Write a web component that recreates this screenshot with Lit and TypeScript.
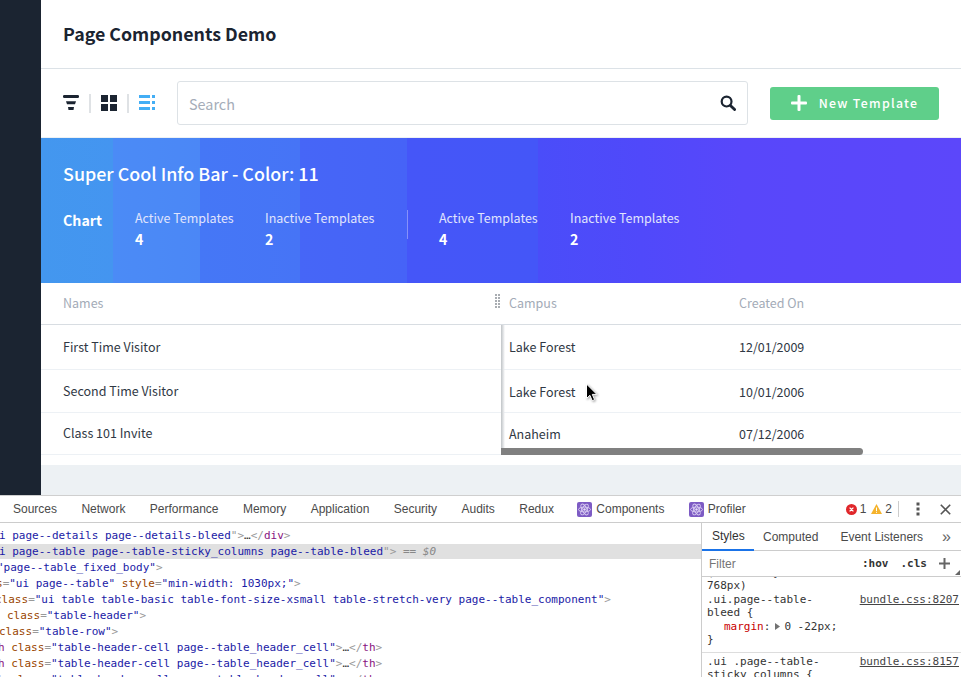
import { LitElement, html, css, svg } from "lit";
import { customElement } from "lit/decorators.js";

type Seg = [string, string];
const N = "n", V = "v", P = "p", T = "t", D = "d", C = "c";

// x offset of each line, the panel is scrolled sideways in the reference
const codeLines: { x: number; sel?: boolean; segs: Seg[] }[] = [
  { x: -1, segs: [[V, "i page--details page--details-bleed"], [P, '">'], [D, "…"], [P, "</"], [T, "div"], [P, ">"]] },
  { x: -1, sel: true, segs: [[V, "i page--table page--table-sticky_columns page--table-bleed"], [P, '">'], [C, " == $0"]] },
  { x: -3, segs: [[V, '"page--table_fixed_body"'], [P, ">"]] },
  { x: -4, segs: [[N, "s"], [P, "="], [V, '"ui page--table"'], [N, " style"], [P, "="], [V, '"min-width: 1030px;"'], [P, ">"]] },
  { x: -5, segs: [[N, "class"], [P, "="], [V, '"ui table table-basic table-font-size-xsmall table-stretch-very page--table_component"'], [P, ">"]] },
  { x: 7, segs: [[N, "class"], [P, "="], [V, '"table-header"'], [P, ">"]] },
  { x: -1, segs: [[N, "class"], [P, "="], [V, '"table-row"'], [P, ">"]] },
  { x: -2, segs: [[T, "h"], [N, " class"], [P, "="], [V, '"table-header-cell page--table_header_cell"'], [P, ">"], [D, "…"], [P, "</"], [T, "th"], [P, ">"]] },
  { x: -2, segs: [[T, "h"], [N, " class"], [P, "="], [V, '"table-header-cell page--table_header_cell"'], [P, ">"], [D, "…"], [P, "</"], [T, "th"], [P, ">"]] },
  { x: -2, segs: [[T, "h"], [N, " class"], [P, "="], [V, '"table-header-cell page--table_header_cell"'], [P, ">"], [D, "…"], [P, "</"], [T, "th"], [P, ">"]] },
];

const names = ["First Time Visitor", "Second Time Visitor", "Class 101 Invite"];
const campus = [
  ["Lake Forest", "12/01/2009"],
  ["Lake Forest", "10/01/2006"],
  ["Anaheim", "07/12/2006"],
];

const reactIcon = svg`<svg class="react" width="15" height="15" viewBox="0 0 15 15">
  <rect width="15" height="15" rx="2" fill="#7d5bc4"/>
  <g fill="none" stroke="#d9cdf2" stroke-width=".9">
    <ellipse cx="7.5" cy="7.5" rx="6" ry="2.4"/>
    <ellipse cx="7.5" cy="7.5" rx="6" ry="2.4" transform="rotate(60 7.5 7.5)"/>
    <ellipse cx="7.5" cy="7.5" rx="6" ry="2.4" transform="rotate(120 7.5 7.5)"/>
  </g>
  <circle cx="7.5" cy="7.5" r="1.2" fill="#e6def7"/>
</svg>`;

@customElement("app-root")
export class AppRoot extends LitElement {
  static styles = css`
    :host {
      display: block;
      height: 677px;
      overflow: hidden;
      background: #fff;
      font-family: "Noto Sans CJK SC", "Noto Sans", sans-serif;
      color: #303844;
    }
    .app {
      display: flex;
      height: 495px;
    }
    .sidebar {
      width: 41px;
      flex: none;
      background: #1b2431;
    }
    .main {
      flex: 1;
      min-width: 0;
      display: flex;
      flex-direction: column;
      background: #edf1f4;
    }
    .page-head {
      height: 68px;
      flex: none;
      padding-left: 22px;
      display: flex;
      align-items: center;
      background: #fff;
      border-bottom: 1px solid #dce2e7;
    }
    .page-head h1 {
      margin: 0;
      font-size: 17.8px;
      line-height: 1;
      font-weight: 700;
      color: #1b2431;
    }
    .toolbar {
      height: 68px;
      flex: none;
      display: flex;
      align-items: center;
      padding: 0 22px;
      background: #fff;
    }
    .tool-icons {
      display: flex;
      align-items: center;
    }
    .tool-icons svg {
      display: block;
    }
    .tool-sep {
      width: 2px;
      height: 19px;
      margin: 0 10px;
      background: #dfe2e5;
    }
    .search {
      flex: 1;
      height: 44px;
      margin: 0 22px;
      box-sizing: border-box;
      border: 1px solid #dde2e6;
      border-radius: 3px;
      display: flex;
      align-items: center;
      justify-content: space-between;
      padding: 0 11px;
      font-size: 14.4px;
      color: #a5adb9;
    }
    .new-btn {
      width: 169px;
      height: 33px;
      flex: none;
      box-sizing: border-box;
      padding-bottom: 1px;
      border-radius: 3px;
      background: #5fcf8a;
      color: #fff;
      display: flex;
      align-items: center;
      justify-content: center;
      gap: 12px;
      font-size: 12.3px;
      font-weight: 500;
      letter-spacing: 1.3px;
    }
    .info {
      height: 145px;
      flex: none;
      margin-top: 1px;
      box-sizing: border-box;
      padding: 22px 22px 0;
      color: #fff;
      background: linear-gradient(
        90deg,
        #4397ef 0,
        #4495f0 72px,
        #4b8bf6 72px,
        #4b87f6 159px,
        #4577f6 159px,
        #4674f6 259px,
        #4666f7 259px,
        #4663f7 366px,
        #4556f8 366px,
        #4456f8 497px,
        #4a4df9 497px,
        #5049fa 600px,
        #5847fa 700px,
        #5c47fa 920px
      );
    }
    .info h2 {
      margin: 0;
      font-size: 17.9px;
      line-height: 26px;
      font-weight: 500;
    }
    .stats {
      display: flex;
      margin-top: 22px;
    }
    .chart {
      width: 72px;
      font-size: 14.2px;
      font-weight: 700;
      line-height: 24px;
    }
    .stat {
      font-size: 12.5px;
      line-height: 20px;
      color: #e0e4fd;
    }
    .stat b {
      display: block;
      font-size: 14.2px;
      line-height: 22px;
      font-weight: 700;
      color: #fff;
    }
    .stat.first { width: 130px; }
    .stat.second { width: 142px; }
    .stat.third { width: 131px; }
    .stats-sep {
      width: 1px;
      height: 29px;
      margin: 2px 31px 0 0;
      background: rgba(255, 255, 255, 0.35);
    }
    .table {
      position: relative;
      height: 172px;
      flex: none;
      display: flex;
      background: #fff;
      padding-bottom: 10px;
    }
    .col-fixed {
      width: 460px;
      flex: none;
    }
    .col-scroll {
      flex: 1;
      min-width: 0;
      position: relative;
    }
    .head {
      height: 42px;
      box-sizing: border-box;
      padding-bottom: 2px;
      border-bottom: 1px solid #d8dde2;
      display: flex;
      align-items: center;
      font-size: 12.5px;
      color: #a3abb7;
    }
    .row {
      display: flex;
      align-items: center;
      box-sizing: border-box;
      border-bottom: 1px solid #edf1f5;
      font-size: 12.5px;
    }
    .row:nth-child(2) {
      height: 45px;
      padding-bottom: 2px;
    }
    .row:nth-child(3) {
      height: 43px;
    }
    .row:nth-child(4) {
      height: 42px;
    }
    .col-fixed .head,
    .col-fixed .row {
      padding-left: 22px;
      padding-bottom: 2px;
      position: relative;
    }
    .col-scroll .cell {
      padding-left: 8px;
      width: 222px;
    }
    .grip {
      position: absolute;
      right: 0;
      top: 11px;
    }
    .edge {
      position: absolute;
      left: 0;
      top: 42px;
      height: 130px;
      width: 4px;
      background: linear-gradient(90deg, #bfc3c6, #e4e6e8 60%, rgba(255, 255, 255, 0));
    }
    .scrollbar {
      position: absolute;
      left: 0;
      top: 165px;
      width: 362px;
      height: 7px;
      background: #808080;
      border-radius: 0 4px 4px 0;
    }
    .cursor {
      position: absolute;
      left: 84px;
      top: 100px;
      filter: drop-shadow(1px 1px 1px rgba(0, 0, 0, 0.35));
    }
    .devtools {
      height: 182px;
      box-sizing: border-box;
      border-top: 1px solid #cfcfcf;
      font-family: "Liberation Sans", Arial, sans-serif;
      font-size: 12px;
      color: #4a4a4a;
    }
    .dt-tabs {
      height: 26px;
      display: flex;
      align-items: center;
      padding-left: 13px;
      gap: 24.4px;
      border-bottom: 1px solid #ccc;
    }
    .dt-tab {
      display: flex;
      align-items: center;
      gap: 4px;
      white-space: nowrap;
    }
    .dt-tab.nudge {
      margin-left: -1px;
    }
    .dt-status {
      margin-left: auto;
      display: flex;
      align-items: center;
      height: 100%;
      font-size: 12px;
    }
    .dt-status svg {
      display: block;
    }
    .count {
      margin: 0 5px 0 3px;
    }
    .dt-sep {
      width: 1px;
      height: 16px;
      background: #ccc;
      margin: 0 17px 0 1px;
    }
    .dots {
      margin-right: 20px;
    }
    .close {
      margin-right: 10px;
    }
    .dt-body {
      display: flex;
      height: 154px;
      overflow: hidden;
    }
    .elements {
      width: 701px;
      flex: none;
      overflow: hidden;
      font: 11px/18px "DejaVu Sans Mono", "Liberation Mono", monospace;
    }
    .clipped-top {
      height: 4px;
      overflow: hidden;
      white-space: pre;
      color: #1a1aa6;
    }
    .clipped-top span {
      display: block;
      margin-top: -14px;
      margin-left: -1px;
    }
    .line {
      white-space: pre;
      height: 16px;
    }
    .line.sel {
      height: 15px;
      line-height: 15px;
      margin-top: 1px;
      background: #e0e0e0;
    }
    .n { color: #994500; }
    .v { color: #1a1aa6; }
    .p { color: #999; }
    .t { color: #881280; }
    .d { color: #333; }
    .c { color: #888; font-style: italic; }
    .styles {
      flex: 1;
      min-width: 0;
      border-left: 1px solid #ccc;
    }
    .st-tabs {
      height: 27px;
      display: flex;
      align-items: stretch;
      border-bottom: 1px solid #ccc;
      padding-right: 10px;
    }
    .st-tab {
      display: flex;
      align-items: center;
      box-sizing: border-box;
      padding: 0 10px;
      white-space: nowrap;
    }
    .st-tab.on {
      color: #333;
      border-bottom: 2px solid #1a73e8;
      height: 28px;
      width: 52px;
    }
    .st-tab.computed {
      margin-left: -1px;
      padding-right: 12px;
    }
    .st-tab.more {
      margin-left: auto;
      padding: 0;
      color: #666;
      font-size: 16px;
    }
    .filter {
      height: 25px;
      display: flex;
      align-items: center;
      justify-content: space-between;
      padding: 0 11px 0 7px;
      border-bottom: 1px solid #ccc;
      color: #757575;
      position: relative;
    }
    .filter-tools {
      display: flex;
      align-items: center;
      gap: 12px;
      color: #333;
      font: 700 11px "DejaVu Sans Mono", monospace;
    }
    .filter-tools svg {
      display: block;
    }
    .corner {
      position: absolute;
      right: 1px;
      bottom: 1px;
    }
    .rules {
      font: 11px/13.5px "DejaVu Sans Mono", "Liberation Mono", monospace;
      color: #333;
    }
    .rule {
      padding: 0 2px 5px 5px;
    }
    .rule + .rule {
      border-top: 1px solid #ddd;
      padding-top: 2px;
    }
    .clip {
      height: 2px;
      overflow: hidden;
      white-space: pre;
    }
    .clip span {
      display: block;
      margin-top: -11px;
    }
    .rule-line {
      display: flex;
      justify-content: space-between;
      white-space: pre;
    }
    .src {
      color: #444;
      text-decoration: underline;
    }
    .decl {
      display: flex;
      align-items: center;
      margin-left: 17px;
    }
    .prop { color: #c80000; }
    .tri {
      margin: 0 4px 0 5px;
    }
  `;

  render() {
    return html`
      <div class="app">
        <div class="sidebar"></div>
        <div class="main">
          <div class="page-head"><h1>Page Components Demo</h1></div>
          ${this.renderToolbar()} ${this.renderInfo()} ${this.renderTable()}
        </div>
      </div>
      ${this.renderDevtools()}
    `;
  }

  renderToolbar() {
    return html`
      <div class="toolbar">
        <div class="tool-icons">
          <svg width="16" height="16" viewBox="0 0 16 16" fill="#1b2431">
            <rect y="0" width="16" height="3" rx="1.2" />
            <path d="M3 6.2h10l-1 3H4z" />
            <path d="M5 12h6l-.5 3h-5z" />
          </svg>
          <div class="tool-sep"></div>
          <svg width="16" height="16" viewBox="0 0 16 16" fill="#1b2431">
            <rect width="7" height="7" />
            <rect x="9" width="7" height="7" />
            <rect y="9" width="7" height="7" />
            <rect x="9" y="9" width="7" height="7" />
          </svg>
          <div class="tool-sep"></div>
          <svg width="16" height="16" viewBox="0 0 16 16" fill="#43aef5">
            <rect width="11" height="3" />
            <rect x="13" width="3" height="3" />
            <rect y="6" width="11" height="3" />
            <rect x="13" y="6" width="3" height="3" />
            <rect y="12" width="11" height="3" />
            <rect x="13" y="12" width="3" height="3" />
          </svg>
        </div>
        <div class="search">
          <span>Search</span>
          <svg width="16" height="16" viewBox="0 0 16 16" fill="none" stroke="#1b2431">
            <circle cx="6.6" cy="6.6" r="4.9" stroke-width="2.2" />
            <path d="M10.4 10.4 14.6 14.6" stroke-width="2.8" stroke-linecap="round" />
          </svg>
        </div>
        <div class="new-btn">
          <svg width="16" height="16" viewBox="0 0 16 16" fill="#fff">
            <rect x="6.5" width="3" height="16" rx="1" />
            <rect y="6.5" width="16" height="3" rx="1" />
          </svg>
          <span>New Template</span>
        </div>
      </div>
    `;
  }

  renderInfo() {
    return html`
      <div class="info">
        <h2>Super Cool Info Bar - Color: 11</h2>
        <div class="stats">
          <div class="chart">Chart</div>
          <div class="stat first">Active Templates<b>4</b></div>
          <div class="stat second">Inactive Templates<b>2</b></div>
          <div class="stats-sep"></div>
          <div class="stat third">Active Templates<b>4</b></div>
          <div class="stat">Inactive Templates<b>2</b></div>
        </div>
      </div>
    `;
  }

  renderTable() {
    return html`
      <div class="table">
        <div class="col-fixed">
          <div class="head">
            Names
            <svg class="grip" width="6" height="14" viewBox="0 0 6 14" fill="#a9adb2">
              ${[0, 3, 6, 9, 12].map(
                (y) => svg`<rect y=${y} width="2" height="2" /><rect x="3" y=${y} width="2" height="2" />`
              )}
            </svg>
          </div>
          ${names.map((n) => html`<div class="row">${n}</div>`)}
        </div>
        <div class="col-scroll">
          <div class="head">
            <div class="cell">Campus</div>
            <div class="cell">Created On</div>
          </div>
          ${campus.map(
            (r) => html`<div class="row">
              <div class="cell">${r[0]}</div>
              <div class="cell">${r[1]}</div>
            </div>`
          )}
          <div class="edge"></div>
          <div class="scrollbar"></div>
          <svg class="cursor" width="13" height="20" viewBox="0 0 13 20">
            <path
              d="M1.5 1v14.5l3.4-3.2 2.3 5.4 2.4-1-2.3-5.3h4.6z"
              fill="#000"
              stroke="#fff"
              stroke-width="1"
            />
          </svg>
        </div>
      </div>
    `;
  }

  renderDevtools() {
    return html`
      <div class="devtools">
        <div class="dt-tabs">
          ${["Sources", "Network", "Performance", "Memory", "Application", "Security", "Audits", "Redux"].map(
            (t) => html`<div class="dt-tab">${t}</div>`
          )}
          <div class="dt-tab nudge">${reactIcon}Components</div>
          <div class="dt-tab">${reactIcon}Profiler</div>
          <div class="dt-status">
            <svg width="11" height="11" viewBox="0 0 11 11">
              <circle cx="5.5" cy="5.5" r="5.5" fill="#e0272b" />
              <path d="M3.6 3.6l3.8 3.8M7.4 3.6 3.6 7.4" stroke="#fff" stroke-width="1.3" />
            </svg>
            <span class="count">1</span>
            <svg width="11" height="10" viewBox="0 0 11 10">
              <path d="M5.5 0 11 10H0z" fill="#f5b32c" />
              <rect x="5" y="3.5" width="1" height="3.5" fill="#fff" />
              <rect x="5" y="7.8" width="1" height="1" fill="#fff" />
            </svg>
            <span class="count">2</span>
            <div class="dt-sep"></div>
            <svg class="dots" width="4" height="14" viewBox="0 0 4 14" fill="#555">
              <rect x=".5" y="0.5" width="3" height="3" />
              <rect x=".5" y="5.5" width="3" height="3" />
              <rect x=".5" y="10.5" width="3" height="3" />
            </svg>
            <svg class="close" width="11" height="11" viewBox="0 0 11 11" stroke="#555" stroke-width="1.6">
              <path d="M.8.8l9.4 9.4M10.2.8.8 10.2" />
            </svg>
          </div>
        </div>
        <div class="dt-body">
          <div class="elements">
            <div class="clipped-top"><span>i page--details page--details</span></div>
            ${codeLines.map(
              (l) => html`<div class="line ${l.sel ? "sel" : ""}"><span style="margin-left:${l.x}px">${l.segs.map(
                ([c, s]) => html`<span class=${c}>${s}</span>`
              )}</span></div>`
            )}
          </div>
          <div class="styles">
            <div class="st-tabs">
              <div class="st-tab on">Styles</div>
              <div class="st-tab computed">Computed</div>
              <div class="st-tab">Event Listeners</div>
              <div class="st-tab more">»</div>
            </div>
            <div class="filter">
              <span>Filter</span>
              <div class="filter-tools">
                <span>:hov</span><span>.cls</span>
                <svg width="11" height="11" viewBox="0 0 11 11" fill="#666">
                  <rect x="4.5" width="2" height="11" />
                  <rect y="4.5" width="11" height="2" />
                </svg>
              </div>
              <svg class="corner" width="5" height="5" viewBox="0 0 5 5" fill="#666"><path d="M5 0v5H0z" /></svg>
            </div>
            <div class="rules">
              <div class="rule">
                <div class="clip"><span>(         y</span></div>
                <div class="rule-line">768px)</div>
                <div class="rule-line"><span>.ui.page--table-</span><span class="src">bundle.css:8207</span></div>
                <div class="rule-line">bleed {</div>
                <div class="decl">
                  <span class="prop">margin</span><span>:</span>
                  <svg class="tri" width="5" height="7" viewBox="0 0 5 7" fill="#727272"><path d="M0 0l5 3.5L0 7z" /></svg>
                  <span>0 -22px;</span>
                </div>
                <div class="rule-line">}</div>
              </div>
              <div class="rule">
                <div class="rule-line"><span>.ui .page--table-</span><span class="src">bundle.css:8157</span></div>
                <div class="rule-line">sticky_columns {</div>
              </div>
            </div>
          </div>
        </div>
      </div>
    `;
  }
}
